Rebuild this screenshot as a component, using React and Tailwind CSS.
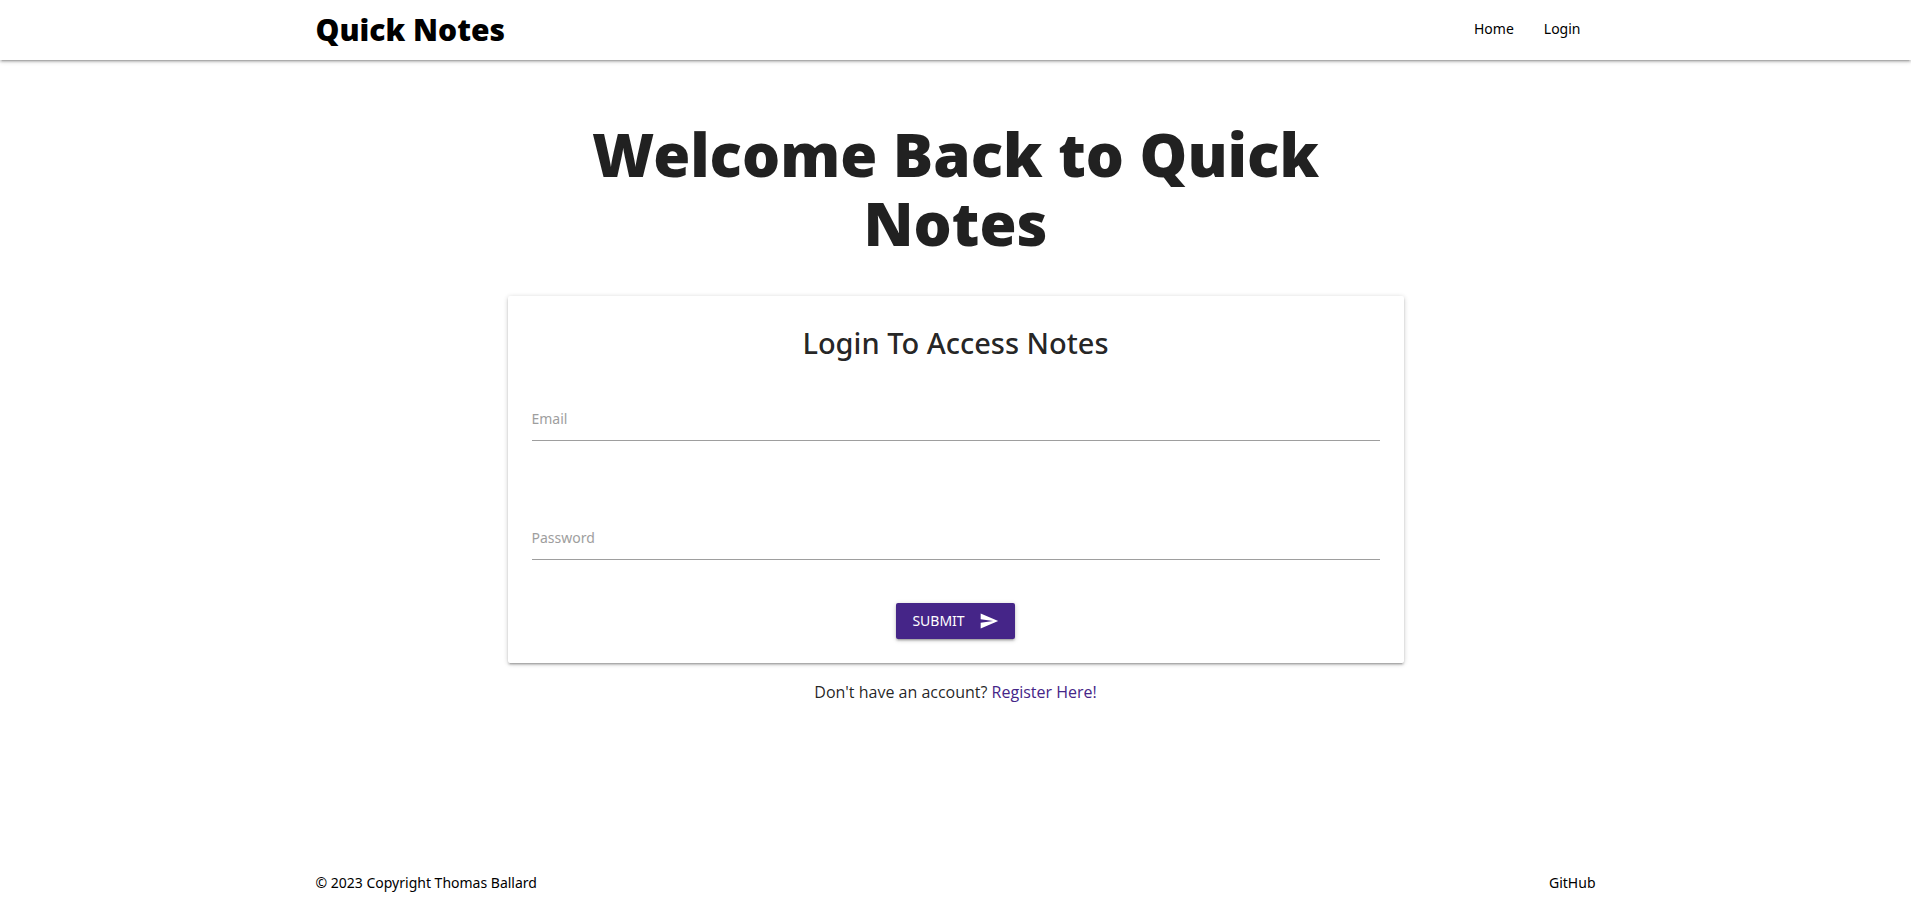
function SendIcon() {
  return (
    <svg viewBox="0 0 24 24" className="size-5 fill-current" aria-hidden="true">
      <path d="M2.01 21 23 12 2.01 3 2 10l15 2-15 2z" />
    </svg>
  );
}

function Field({ id, label, type }) {
  return (
    <div className="relative">
      <input
        id={id}
        type={type}
        placeholder=" "
        className="peer block h-[46px] w-full border-b border-[#9e9e9e] bg-transparent text-base outline-none focus:border-[#452588]"
      />
      <label
        htmlFor={id}
        className="absolute left-0 top-3 text-sm leading-6 text-[#9e9e9e] peer-focus:-top-3 peer-[:not(:placeholder-shown)]:-top-3"
      >
        {label}
      </label>
    </div>
  );
}

export default function App() {
  return (
    <div className="flex min-h-screen flex-col bg-white font-['Noto_Sans','Open_Sans',sans-serif] text-sm text-black/87">
      <nav className="bg-white text-black shadow-[0_2px_2px_0_rgba(0,0,0,0.14),0_3px_1px_-2px_rgba(0,0,0,0.12),0_1px_5px_0_rgba(0,0,0,0.2)]">
        <div className="mx-auto flex h-[60px] max-w-7xl items-start justify-between leading-[58px]">
          <a href="#" className="text-3xl leading-[60px] font-black">Quick Notes</a>
          <ul className="flex">
            <li><a href="#" className="block px-[15px]">Home</a></li>
            <li><a href="#" className="block px-[15px]">Login</a></li>
          </ul>
        </div>
      </nav>

      <main className="mx-auto w-full max-w-4xl flex-1">
        <h1 className="mt-[60px] mb-[38px] text-center text-[60px] leading-[69px] font-black">
          Welcome Back to Quick Notes
        </h1>
        <form className="rounded-xs bg-white px-6 pt-6 pb-6 shadow-[0_2px_2px_0_rgba(0,0,0,0.14),0_3px_1px_-2px_rgba(0,0,0,0.12),0_1px_5px_0_rgba(0,0,0,0.2)]">
          <h2 className="text-center text-[29px] leading-[46px] font-medium">Login To Access Notes</h2>
          <div className="mt-[29px] flex flex-col gap-[73px]">
            <Field id="email" label="Email" type="email" />
            <Field id="password" label="Password" type="password" />
          </div>
          <div className="mt-[43px] flex justify-center">
            <button
              type="button"
              className="flex h-9 items-center gap-3.5 rounded-xs bg-[#452588] px-4 text-sm text-white uppercase shadow-[0_2px_2px_0_rgba(0,0,0,0.14),0_3px_1px_-2px_rgba(0,0,0,0.12),0_1px_5px_0_rgba(0,0,0,0.2)]"
            >
              Submit
              <SendIcon />
            </button>
          </div>
        </form>
        <p className="mt-[17px] text-center font-['Open_Sans','Noto_Sans',sans-serif] text-base">
          Don't have an account? <a href="#" className="text-[#452588]">Register Here!</a>
        </p>
      </main>

      <footer className="text-black">
        <div className="mx-auto flex max-w-7xl items-center justify-between pt-3 pb-[9px]">
          <span>© 2023 Copyright Thomas Ballard</span>
          <a href="#">GitHub</a>
        </div>
      </footer>
    </div>
  );
}
